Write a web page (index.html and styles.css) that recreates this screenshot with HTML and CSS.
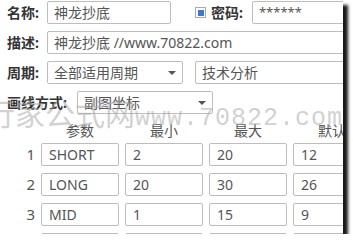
FILE: index.html
```html
<!DOCTYPE html>
<html lang="zh-CN">
<head>
    <meta charset="UTF-8">
    <meta name="viewport" content="width=device-width, initial-scale=1.0">
    <title>指标属性</title>
    <link rel="stylesheet" href="styles.css">
</head>
<body>

<div class="panel">
    <div class="form">
        <div class="row">
            <label class="lbl">名称:</label>
            <div class="field name">神龙抄底</div>
            <span class="check"><span class="check-dot"></span></span>
            <label class="lbl pass-lbl">密码:</label>
            <div class="field pass">******</div>
        </div>

        <div class="row">
            <label class="lbl">描述:</label>
            <div class="field desc">神龙抄底 //www.70822.com</div>
        </div>

        <div class="row">
            <label class="lbl">周期:</label>
            <div class="field select">全部适用周期<span class="caret"></span></div>
            <div class="field kind">技术分析</div>
        </div>

        <div class="row">
            <label class="lbl wide">画线方式:</label>
            <div class="field select">副图坐标<span class="caret"></span></div>
        </div>
    </div>

    <div class="params">
        <div class="thead">
            <span></span>
            <span>参数</span>
            <span>最小</span>
            <span>最大</span>
            <span>默认</span>
        </div>
        <div class="tbody">
            <span class="num">1</span>
            <div class="field">SHORT</div>
            <div class="field">2</div>
            <div class="field">20</div>
            <div class="field">12</div>

            <span class="num">2</span>
            <div class="field">LONG</div>
            <div class="field">20</div>
            <div class="field">30</div>
            <div class="field">26</div>

            <span class="num">3</span>
            <div class="field">MID</div>
            <div class="field">1</div>
            <div class="field">15</div>
            <div class="field">9</div>

            <span class="num">4</span>
            <div class="field"></div>
            <div class="field"></div>
            <div class="field"></div>
            <div class="field"></div>
        </div>
    </div>

    <div class="watermark">行家公式网<span class="wm-url">www.70822.com</span></div>
</div>

</body>
</html>
```

FILE: styles.css
```css
body {
    margin: 0;
    background: #fff;
    font-family: "Noto Sans", "Noto Sans CJK SC", sans-serif;
    font-size: 14px;
    color: #555;
}

.panel {
    position: relative;
    width: 343px;
    height: 234px;
    overflow: hidden;
    background: #fff;
    box-shadow: 5px 5px 3px #1a1a1a;
}

.form {
    display: flex;
    flex-direction: column;
    gap: 7px;
    padding: 1px 0 0 7px;
}

.row {
    display: flex;
    align-items: center;
    height: 23px;
}

.lbl {
    flex: none;
    width: 40px;
    font-weight: bold;
    color: #333;
    line-height: 23px;
}

.lbl.wide {
    width: 70px;
}

.field {
    flex: none;
    box-sizing: border-box;
    height: 23px;
    padding: 0 6px;
    border: 1px solid #bdbdbd;
    border-radius: 2px;
    line-height: 21px;
    white-space: nowrap;
    overflow: hidden;
    color: #555;
}

.name {
    width: 124px;
}

.check {
    flex: none;
    box-sizing: border-box;
    width: 11px;
    height: 11px;
    margin-left: 24px;
    border: 1px solid #aaa;
    background: #fff;
    display: flex;
    align-items: center;
    justify-content: center;
}

.check-dot {
    width: 6px;
    height: 6px;
    background: #3c78d8;
}

.pass-lbl {
    width: auto;
    margin-left: 5px;
}

.pass {
    width: 140px;
    margin-left: 9px;
    font-size: 13px;
}

.desc {
    width: 320px;
}

.select {
    position: relative;
    width: 136px;
}

.caret {
    position: absolute;
    right: 6px;
    top: 9px;
    width: 0;
    height: 0;
    border-left: 4px solid transparent;
    border-right: 4px solid transparent;
    border-top: 4px solid #555;
}

.kind {
    width: 160px;
    margin-left: 12px;
}

.params {
    margin-top: 7px;
    padding-left: 7px;
}

.thead,
.tbody {
    display: grid;
    grid-template-columns: 28px repeat(4, 78px);
    column-gap: 6px;
}

.thead {
    height: 22px;
    align-items: end;
    text-align: center;
    line-height: 16px;
    padding-bottom: 4px;
    box-sizing: border-box;
    white-space: nowrap;
}

.tbody {
    row-gap: 7px;
}

.tbody .field {
    padding: 0 7px;
}

.num {
    text-align: right;
    line-height: 23px;
    font-size: 15px;
}

.watermark {
    position: absolute;
    left: -15px;
    top: 99px;
    font-family: "Liberation Serif", "Noto Sans CJK SC", serif;
    font-size: 30px;
    line-height: 32px;
    color: rgba(170, 170, 170, 0.55);
    white-space: nowrap;
    pointer-events: none;
}

.wm-url {
    font-family: "Liberation Mono", monospace;
    font-size: 25px;
    letter-spacing: 1px;
}
```
